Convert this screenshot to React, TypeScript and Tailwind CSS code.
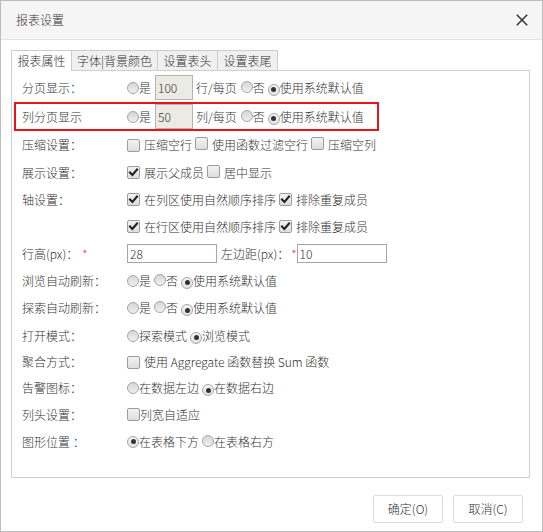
import React from "react";

const Radio = ({ checked = false }: { checked?: boolean }) => (
  <span
    className={
      "inline-flex items-center justify-center w-[12px] h-[12px] rounded-full border border-[#a5a5a5] shrink-0 " +
      (checked ? "bg-gradient-to-b from-[#f4f4f4] to-[#e2e2e2]" : "bg-gradient-to-b from-[#d6d6d6] to-[#f0f0f0]")
    }
  >
    {checked && <span className="block w-[5px] h-[5px] rounded-full bg-[#333]" />}
  </span>
);

const Checkbox = ({ checked = false }: { checked?: boolean }) => (
  <span className="inline-flex items-center justify-center w-[13px] h-[13px] rounded-[2px] border border-[#9c9c9c] bg-gradient-to-b from-[#f2f2f2] to-[#dedede] shrink-0">
    {checked && (
      <svg width="11" height="11" viewBox="0 0 11 11">
        <path d="M2 5.6 L4.4 8 L9 2.6" fill="none" stroke="#222" strokeWidth="2.1" strokeLinecap="square" />
      </svg>
    )}
  </span>
);

const Row = ({
  h,
  label,
  children,
}: {
  h: string;
  label: React.ReactNode;
  children?: React.ReactNode;
}) => (
  <div className={"flex items-center " + h}>
    <div className="w-[115px] pl-[10px] shrink-0 flex items-center">{label}</div>
    <div className="flex items-center">{children}</div>
  </div>
);

const T = ({ children, cls = "" }: { children: React.ReactNode; cls?: string }) => (
  <span className={"whitespace-nowrap " + cls}>{children}</span>
);

export default function App() {
  return (
    <div className="w-[543px] h-[532px] border border-[#bcbcbc] bg-white flex flex-col font-['Noto_Sans_CJK_SC','Noto_Sans',sans-serif] font-light text-[12px] leading-[16px] text-[#333]">
      {/* title bar */}
      <div className="h-[39px] shrink-0 bg-[#f5f5f5] border-b border-[#e3e3e3] flex items-center justify-between pl-[15px] pr-[14px]">
        <span className="text-[#333]">报表设置</span>
        <svg width="12" height="12" viewBox="0 0 12 12">
          <path d="M0.8 0.8 L11.2 11.2 M11.2 0.8 L0.8 11.2" stroke="#333" strokeWidth="1.5" />
        </svg>
      </div>

      <div className="px-[10px] pt-[10px]">
        {/* tabs */}
        <div className="flex items-end h-[20px]">
          <div className="relative z-10 -mb-px h-[21px] w-[61px] border border-b-0 border-[#cccccc] bg-white flex items-center justify-center">
            报表属性
          </div>
          <div className="-ml-px h-[20px] w-[87px] border border-b-0 border-[#cccccc] bg-[#f0f0f0] flex items-center justify-center">
            字体|背景颜色
          </div>
          <div className="-ml-px h-[20px] w-[61px] border border-b-0 border-[#cccccc] bg-[#f0f0f0] flex items-center justify-center">
            设置表头
          </div>
          <div className="-ml-px h-[20px] w-[61px] border border-b-0 border-[#cccccc] bg-[#f0f0f0] flex items-center justify-center">
            设置表尾
          </div>
        </div>

        {/* panel */}
        <div className="w-[519px] h-[408px] border border-[#cfcfcf] pt-[2px] flex flex-col">
          <Row h="h-[29px]" label="分页显示：">
            <Radio />
            <T>是</T>
            <div className="ml-[4px] w-[38px] h-[25px] border border-[#b3b3b3] bg-[#ebebe4] flex items-center pl-[2px] text-[#333]">
              100
            </div>
            <T cls="ml-[3px]">行/每页</T>
            <span className="ml-[4px]"><Radio /></span>
            <T>否</T>
            <span className="ml-[3px]"><Radio checked /></span>
            <T>使用系统默认值</T>
          </Row>

          <div className="relative">
            <Row h="h-[29px]" label="列分页显示">
              <Radio />
              <T>是</T>
              <div className="ml-[4px] w-[38px] h-[25px] border border-[#b3b3b3] bg-[#ebebe4] flex items-center pl-[2px] text-[#333]">
                50
              </div>
              <T cls="ml-[3px]">列/每页</T>
              <span className="ml-[4px]"><Radio /></span>
              <T>否</T>
              <span className="ml-[3px]"><Radio checked /></span>
              <T>使用系统默认值</T>
            </Row>
            <div className="absolute left-[2px] top-0 w-[365px] h-[29px] border-2 border-[#e8141b] pointer-events-none" />
          </div>

          <Row h="h-[28px]" label="压缩设置：">
            <Checkbox />
            <T cls="ml-[4px]">压缩空行</T>
            <span className="ml-[3px]"><Checkbox /></span>
            <T cls="ml-[4px]">使用函数过滤空行</T>
            <span className="ml-[3px]"><Checkbox /></span>
            <T cls="ml-[4px]">压缩空列</T>
          </Row>

          <Row h="h-[27px]" label="展示设置：">
            <Checkbox checked />
            <T cls="ml-[4px]">展示父成员</T>
            <span className="ml-[3px]"><Checkbox /></span>
            <T cls="ml-[4px]">居中显示</T>
          </Row>

          <Row h="h-[27px]" label="轴设置：">
            <Checkbox checked />
            <T cls="ml-[4px]">在列区使用自然顺序排序</T>
            <span className="ml-[3px]"><Checkbox checked /></span>
            <T cls="ml-[4px]">排除重复成员</T>
          </Row>

          <Row h="h-[27px]" label="">
            <Checkbox checked />
            <T cls="ml-[4px]">在行区使用自然顺序排序</T>
            <span className="ml-[3px]"><Checkbox checked /></span>
            <T cls="ml-[4px]">排除重复成员</T>
          </Row>

          <Row
            h="h-[27px]"
            label={
              <>
                <T>行高(px)：</T>
                <span className="ml-[4px] text-[#e33]">*</span>
              </>
            }
          >
            <div className="w-[90px] h-[19px] border border-[#a6a6a6] flex items-center pl-[2px]">28</div>
            <T cls="ml-[4px]">左边距(px)：</T>
            <span className="ml-[2px] text-[#e33]">*</span>
            <div className="w-[90px] h-[19px] border border-[#a6a6a6] flex items-center pl-[2px]">10</div>
          </Row>

          <Row h="h-[27px]" label="浏览自动刷新：">
            <Radio />
            <T>是</T>
            <span className="ml-[3px]"><Radio /></span>
            <T>否</T>
            <span className="ml-[3px]"><Radio checked /></span>
            <T>使用系统默认值</T>
          </Row>

          <Row h="h-[28px]" label="探索自动刷新：">
            <Radio />
            <T>是</T>
            <span className="ml-[3px]"><Radio /></span>
            <T>否</T>
            <span className="ml-[3px]"><Radio checked /></span>
            <T>使用系统默认值</T>
          </Row>

          <Row h="h-[27px]" label="打开模式：">
            <Radio />
            <T>探索模式</T>
            <span className="ml-[3px]"><Radio checked /></span>
            <T>浏览模式</T>
          </Row>

          <Row h="h-[26px]" label="聚合方式：">
            <Checkbox />
            <T cls="ml-[4px]">使用 Aggregate 函数替换 Sum 函数</T>
          </Row>

          <Row h="h-[26px]" label="告警图标：">
            <Radio />
            <T>在数据左边</T>
            <span className="ml-[3px]"><Radio checked /></span>
            <T>在数据右边</T>
          </Row>

          <Row h="h-[27px]" label="列头设置：">
            <Checkbox />
            <T>列宽自适应</T>
          </Row>

          <Row h="h-[27px]" label="图形位置 ：">
            <Radio checked />
            <T>在表格下方</T>
            <span className="ml-[3px]"><Radio /></span>
            <T>在表格右方</T>
          </Row>
        </div>
      </div>

      {/* footer */}
      <div className="flex justify-end gap-[10px] pr-[19px] pt-[17px]">
        <button className="w-[70px] h-[28px] border border-[#dcdcdc] rounded-[2px] bg-white text-[#333] text-[12px]">
          确定(O)
        </button>
        <button className="w-[70px] h-[28px] border border-[#dcdcdc] rounded-[2px] bg-white text-[#333] text-[12px]">
          取消(C)
        </button>
      </div>
    </div>
  );
}
